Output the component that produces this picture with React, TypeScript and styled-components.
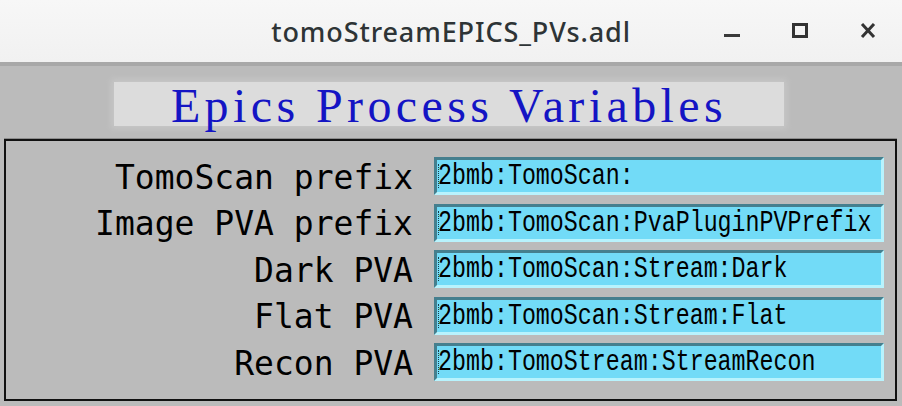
import React from 'react';
import styled, { createGlobalStyle } from 'styled-components';

const GlobalStyle = createGlobalStyle`
    html, body {
        margin: 0;
        padding: 0;
        background: #bbbbbb;
        overflow: hidden;
    }
`;

const Window = styled.div`
    width: 902px;
    height: 406px;
    display: flex;
    flex-direction: column;
    background: #bbbbbb;
`;

const TitleBar = styled.header`
    height: 62px;
    display: grid;
    grid-template-columns: 1fr auto 1fr;
    align-items: center;
    background: linear-gradient(#f7f7f7, #f1f1f1);
    border-bottom: 4px solid #a8a8a8;
    flex: 0 0 auto;
`;

const WindowTitle = styled.h1`
    grid-column: 2;
    margin: 0;
    font-family: "Noto Sans", "DejaVu Sans", sans-serif;
    font-size: 27px;
    font-weight: 500;
    letter-spacing: 0.9px;
    color: #2e3436;
`;

const Controls = styled.div`
    grid-column: 3;
    justify-self: end;
    display: flex;
    align-items: center;
    gap: 52px;
    padding-right: 26px;

    svg {
        display: block;
        width: 16px;
        height: 16px;
    }
`;

const Body = styled.main`
    flex: 1;
    display: flex;
    flex-direction: column;
    padding: 16px 5px 0 4px;
`;

const Banner = styled.div`
    margin-left: 110px;
    width: 670px;
    height: 44px;
    background: #dcdcdc;
    box-shadow: 0 0 6px 3px #c6c6c6;
    display: flex;
    align-items: center;
    justify-content: center;
    font-family: "Liberation Serif", "DejaVu Serif", serif;
    font-size: 48px;
    letter-spacing: 4.4px;
    color: #1414c4;
    line-height: 1;
    padding-top: 3px;
    box-sizing: border-box;
`;

const Frame = styled.section`
    box-sizing: border-box;
    margin-top: 13px;
    height: 262px;
    border: 2px solid #111111;
    box-shadow: 0 -1px 0 #8c8c8c;
    display: grid;
    grid-template-columns: 407px 450px;
    grid-auto-rows: 38px;
    column-gap: 21px;
    row-gap: 8.5px;
    align-content: start;
    padding-top: 16px;
`;

const Label = styled.div`
    display: flex;
    align-items: center;
    justify-content: flex-end;
    font-family: "DejaVu Sans Mono", "Liberation Mono", monospace;
    font-size: 33px;
    color: #000000;
    white-space: nowrap;
    padding-top: 2px;
`;

const Field = styled.div`
    position: relative;
    display: flex;
    align-items: center;
    box-sizing: border-box;
    background: #72dbf7;
    border-style: solid;
    border-width: 3px;
    border-color: #457f8e #b8f3fd #b8f3fd #457f8e;
    padding-left: 1px;
    overflow: hidden;

    &::before {
        content: '';
        position: absolute;
        left: 1px;
        top: 4px;
        bottom: 4px;
        border-left: 1px dotted #1a3a44;
    }
`;

const FieldText = styled.span`
    font-family: "Liberation Mono", "DejaVu Sans Mono", monospace;
    font-size: 23.3px;
    color: #000000;
    white-space: nowrap;
    display: inline-block;
    transform: scaleY(1.25);
    transform-origin: left center;
`;

const pvs = [
    { label: 'TomoScan prefix', value: '2bmb:TomoScan:' },
    { label: 'Image PVA prefix', value: '2bmb:TomoScan:PvaPluginPVPrefix' },
    { label: 'Dark PVA', value: '2bmb:TomoScan:Stream:Dark' },
    { label: 'Flat PVA', value: '2bmb:TomoScan:Stream:Flat' },
    { label: 'Recon PVA', value: '2bmb:TomoStream:StreamRecon' },
];

export default function App(): JSX.Element {
    return (
        <Window>
            <GlobalStyle />
            <TitleBar>
                <WindowTitle>tomoStreamEPICS_PVs.adl</WindowTitle>
                <Controls>
                    <svg viewBox="0 0 16 16">
                        <rect x="0" y="11" width="16" height="3" fill="#3a3a3a" />
                    </svg>
                    <svg viewBox="0 0 16 16">
                        <rect x="1.5" y="1.5" width="13" height="12" fill="none" stroke="#333" strokeWidth="3" />
                    </svg>
                    <svg viewBox="0 0 16 16">
                        <path d="M2 1 L14 14 M14 1 L2 14" stroke="#333" strokeWidth="3" />
                    </svg>
                </Controls>
            </TitleBar>
            <Body>
                <Banner>Epics Process Variables</Banner>
                <Frame>
                    {pvs.map((pv) => (
                        <React.Fragment key={pv.label}>
                            <Label>{pv.label}</Label>
                            <Field>
                                <FieldText>{pv.value}</FieldText>
                            </Field>
                        </React.Fragment>
                    ))}
                </Frame>
            </Body>
        </Window>
    );
}
